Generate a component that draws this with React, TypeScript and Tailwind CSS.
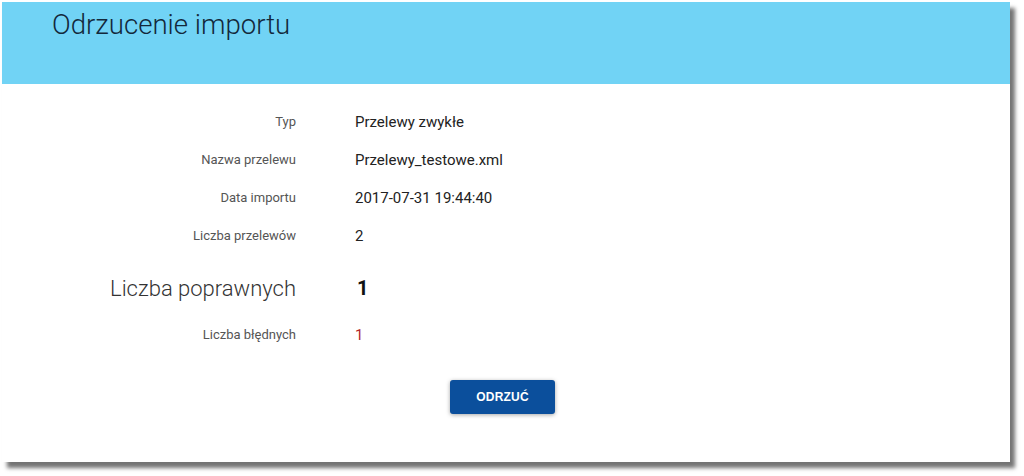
const rows = [
  { label: "Typ", value: "Przelewy zwykłe" },
  { label: "Nazwa przelewu", value: "Przelewy_testowe.xml" },
  { label: "Data importu", value: "2017-07-31 19:44:40" },
  { label: "Liczba przelewów", value: "2" },
];

export default function App() {
  return (
    <div className="w-[1024px] h-[476px] bg-white pl-[2px] pt-[2px] font-['Roboto',sans-serif]">
      <div className="w-[1008px] h-[460px] bg-white shadow-[5px_6px_4px_rgba(0,0,0,0.55)] flex flex-col">
        {/* Header */}
        <div className="h-[82px] bg-[#71d3f5] pl-[50px] pt-[9px]">
          <h1 className="text-[27.6px] leading-[28px] font-light text-[#13283b]">
            Odrzucenie importu
          </h1>
        </div>

        {/* Details */}
        <div className="pt-[19px] flex flex-col">
          {rows.map((row) => (
            <div key={row.label} className="h-[38px] flex items-center">
              <div className="w-[294px] text-right text-[13px] text-[#555]">
                {row.label}
              </div>
              <div className="ml-[59px] text-[15px] text-[#222]">{row.value}</div>
            </div>
          ))}

          <div className="h-[52px] mt-[7px] flex items-center">
            <div className="w-[294px] text-right text-[22px] font-light text-[#333]">
              Liczba poprawnych
            </div>
            <div className="ml-[61px] text-[20px] font-bold text-[#111]">1</div>
          </div>

          <div className="h-[38px] mt-[2px] flex items-center">
            <div className="w-[294px] text-right text-[13px] text-[#555]">
              Liczba błędnych
            </div>
            <div className="ml-[59px] text-[15px] text-[#b0282c]">1</div>
          </div>

          <div className="mt-[26px] flex justify-center pr-[7px]">
            <button className="w-[105px] h-[34px] rounded-[3px] bg-[#0b4f9c] text-white text-[12px] font-bold tracking-[0.2px] shadow-[0_1px_4px_rgba(0,0,0,0.35)] font-['Liberation_Sans',sans-serif]">
              ODRZUĆ
            </button>
          </div>
        </div>
      </div>
    </div>
  );
}
